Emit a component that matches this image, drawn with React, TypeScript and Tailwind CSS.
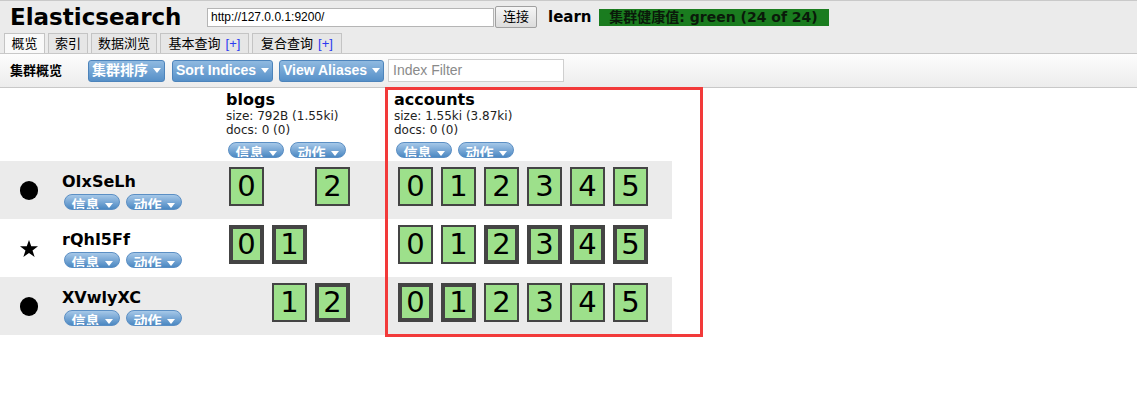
import React from "react";

type Shard = { n: number; primary: boolean };

const nodes: { name: string; master: boolean; blogs: (Shard | null)[]; accounts: (Shard | null)[] }[] = [
  {
    name: "OIxSeLh",
    master: false,
    blogs: [{ n: 0, primary: false }, null, { n: 2, primary: false }],
    accounts: [0, 1, 2, 3, 4, 5].map((n) => ({ n, primary: false })),
  },
  {
    name: "rQhI5Ff",
    master: true,
    blogs: [{ n: 0, primary: true }, { n: 1, primary: true }],
    accounts: [0, 1, 2, 3, 4, 5].map((n) => ({ n, primary: n >= 2 })),
  },
  {
    name: "XVwlyXC",
    master: false,
    blogs: [null, { n: 1, primary: false }, { n: 2, primary: true }],
    accounts: [0, 1, 2, 3, 4, 5].map((n) => ({ n, primary: n < 2 })),
  },
];

const cjk = "font-['DejaVu_Sans','Noto_Sans_CJK_SC',sans-serif]";

function Caret() {
  return (
    <svg width="8" height="5" viewBox="0 0 8 5" className="ml-[5px] shrink-0">
      <path d="M0 0h8L4 5z" fill="#fff" />
    </svg>
  );
}

function Pill({ label }: { label: string }) {
  return (
    <div className="flex h-[16px] w-[56px] items-start justify-center overflow-hidden rounded-full border border-[#5b8fc4] bg-gradient-to-b from-[#a6c8e8] to-[#4b88c2]">
      <span className={`${cjk} flex items-center whitespace-nowrap text-[14px] font-bold leading-[20px] text-white`}>
        {label}
        <Caret />
      </span>
    </div>
  );
}

function ToolButton({ label, w }: { label: string; w: string }) {
  return (
    <div
      className={`${w} flex h-[22px] items-center justify-center whitespace-nowrap rounded-[3px] border border-[#4d84bb] bg-gradient-to-b from-[#8fb9e0] to-[#5690c8] font-['Liberation_Sans','Noto_Sans_CJK_SC',sans-serif] text-[14px] font-bold text-white`}
    >
      {label}
      <Caret />
    </div>
  );
}

function ShardBox({ s }: { s: Shard | null }) {
  if (!s) return <div className="h-[39px] w-[35px]" />;
  return (
    <div
      className={`flex h-[39px] w-[35px] items-center justify-center bg-[#9de08b] text-[29px] leading-none text-black ${
        s.primary ? "border-[4px] border-[#444]" : "border-2 border-[#444]"
      }`}
    >
      {s.n}
    </div>
  );
}

function IndexHeader({ name, size, pad }: { name: string; size: string; pad: string }) {
  return (
    <div className={`${pad} pt-[3px]`}>
      <div className="text-[16px] font-bold leading-[18px] text-black">{name}</div>
      <div className="text-[12px] leading-[14px] text-[#222]">{size}</div>
      <div className="text-[12px] leading-[14px] text-[#222]">docs: 0 (0)</div>
      <div className="mt-[5px] flex gap-[6px] pl-[2px]">
        <Pill label="信息" />
        <Pill label="动作" />
      </div>
    </div>
  );
}

export default function App() {
  return (
    <div className={`${cjk} relative h-[400px] w-[1137px] bg-white text-black`}>
      <div className="border-t border-[#c9c9c9] bg-[#ebebeb]">
        <div className="flex h-[32px] items-center pl-[10px]">
          <div className="w-[197px] text-[23px] font-bold leading-none">Elasticsearch</div>
          <div className="flex h-[19px] w-[287px] items-center border border-[#b5b5b5] bg-white pl-[3px] font-['Liberation_Sans',sans-serif] text-[12px]">
            http://127.0.0.1:9200/
          </div>
          <div className="ml-[1px] flex h-[22px] w-[42px] items-center justify-center rounded-[2px] border border-[#a0a0a0] bg-gradient-to-b from-[#f6f6f6] to-[#dcdcdc] text-[13px]">
            连接
          </div>
          <div className="ml-[11px] text-[15px] font-bold">learn</div>
          <div className="ml-[7px] flex h-[17px] w-[230px] items-center justify-center whitespace-nowrap bg-[#1a7c1f] text-[14px] font-bold text-[#0a1a0a]">
            集群健康值: green (24 of 24)
          </div>
        </div>
        <div className="flex h-[20px] items-end gap-[3px] pl-[4px]">
          {[
            ["概览", "w-[41px]"],
            ["索引", "w-[40px]"],
            ["数据浏览", "w-[66px]"],
            ["基本查询", "w-[89px]"],
            ["复合查询", "w-[90px]"],
          ].map(([t, w], i) => (
            <div
              key={t}
              className={`${w} flex h-[20px] items-center justify-center whitespace-nowrap border border-b-0 border-[#c4c4c4] text-[13px] ${
                i === 0 ? "bg-[#f9f9f9]" : "bg-[#e6e6e6]"
              }`}
            >
              {t}
              {i > 2 && <span className="ml-[5px] font-['Liberation_Sans',sans-serif] text-[#2b3bf0]">[+]</span>}
            </div>
          ))}
        </div>
      </div>
      <div className="flex h-[35px] items-center border-y border-[#c8c8c8] bg-gradient-to-b from-[#fdfdfd] to-[#ececec]">
        <div className="ml-[10px] w-[78px] text-[13px] font-bold">集群概览</div>
        <ToolButton label="集群排序" w="w-[77px]" />
        <div className="ml-[7px]">
          <ToolButton label="Sort Indices" w="w-[101px]" />
        </div>
        <div className="ml-[6px]">
          <ToolButton label="View Aliases" w="w-[105px]" />
        </div>
        <div className="ml-[4px] flex h-[23px] w-[176px] items-center border border-[#cfcfcf] bg-white pl-[4px] font-['Liberation_Sans',sans-serif] text-[14px] text-[#8a8a8a]">
          Index Filter
        </div>
      </div>

      <div className="grid w-[672px] grid-cols-[222px_168px_282px]">
        <div className="h-[73px]" />
        <IndexHeader name="blogs" size="size: 792B (1.55ki)" pad="pl-[4px]" />
        <IndexHeader name="accounts" size="size: 1.55ki (3.87ki)" pad="pl-[4px]" />
        {nodes.map((node, i) => {
          const bg = i % 2 === 0 ? "bg-[#ebebeb]" : "bg-white";
          return (
            <React.Fragment key={node.name}>
              <div className={`${bg} flex h-[58px] items-center pl-[20px]`}>
                <div className="flex w-[18px] justify-center">
                  {node.master ? (
                    <svg width="20" height="19" viewBox="0 0 24 23">
                      <path d="M12 0l3 8.6h9l-7.3 5.4 2.8 8.7L12 17.4l-7.5 5.3 2.8-8.7L0 8.6h9z" fill="#000" />
                    </svg>
                  ) : (
                    <div className="h-[19px] w-[19px] rounded-full bg-black" />
                  )}
                </div>
                <div className="ml-[24px] pt-[2px]">
                  <div className="text-[16px] font-bold leading-[19px]">{node.name}</div>
                  <div className="mt-[3px] flex gap-[6px] pl-[2px]">
                    <Pill label="信息" />
                    <Pill label="动作" />
                  </div>
                </div>
              </div>
              <div className={`${bg} flex h-[58px] gap-[8px] pl-[7px] pt-[6px]`}>
                {node.blogs.map((s, j) => (
                  <ShardBox key={j} s={s} />
                ))}
              </div>
              <div className={`${bg} flex h-[58px] gap-[8px] pl-[8px] pt-[6px]`}>
                {node.accounts.map((s, j) => (
                  <ShardBox key={j} s={s} />
                ))}
              </div>
            </React.Fragment>
          );
        })}
      </div>

      <div className="pointer-events-none absolute left-[385px] top-[87px] h-[250px] w-[318px] border-[3px] border-[#f23a3a]" />
    </div>
  );
}
